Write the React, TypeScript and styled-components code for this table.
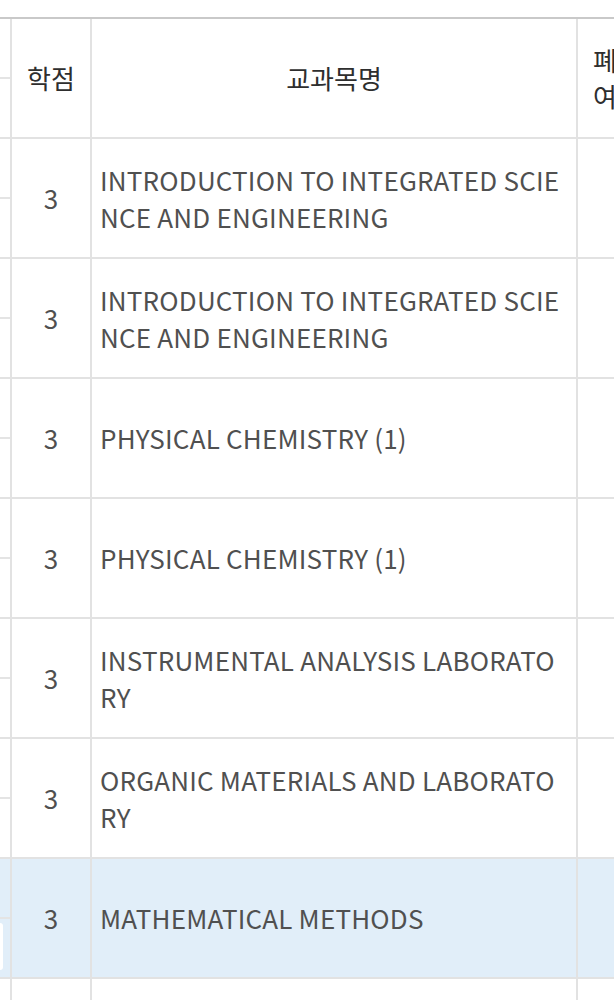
import React from "react";
import styled, { createGlobalStyle } from "styled-components";

const Global = createGlobalStyle`
  html, body { margin: 0; padding: 0; background: #fff; overflow: hidden; }
  body { font-family: "Noto Sans CJK KR", "Noto Sans", sans-serif; }
`;

const Page = styled.div`
  padding-top: 17px;
  width: 614px;
  height: 1000px;
  overflow: hidden;
`;

const Table = styled.table`
  border-collapse: separate;
  border-spacing: 0;
  border-top: 2px solid #c9c9c9;
  table-layout: fixed;
  width: 660px;
  font-size: 26px;
  line-height: 37.5px;
`;

const Row = styled.tr<{ $active?: boolean }>`
  background: ${(p) => (p.$active ? "#e1eef9" : "#fff")};
`;

const Cell = styled.td<{ $align?: string }>`
  height: 118px;
  padding: ${(p) => (p.$align === "center" ? "0" : "0 11px 0 8px")};
  border-right: 2px solid #e2e2e2;
  border-bottom: 2px solid #e2e2e2;
  color: #505050;
  letter-spacing: 0.2px;
  vertical-align: middle;
  text-align: ${(p) => p.$align || "left"};
  word-break: break-all;
  box-sizing: content-box;
`;

const HeadCell = styled(Cell).attrs({ as: "th" })`
  color: #2e2e2e;
  font-weight: 400;
  text-align: center;
  letter-spacing: 0;
  padding: 0;
`;

const EdgeCell = styled.td`
  padding: 0;
  height: 118px;
  border-right: 2px solid #e2e2e2;
  border-bottom: 2px solid #e2e2e2;
  vertical-align: top;
`;

const EdgeTop = styled.div`
  height: 58px;
  border-bottom: 2px solid #e4e4e4;
`;

const EdgeButton = styled.div`
  margin-top: 4px;
  height: 47px;
  width: 3px;
  background: #fff;
  border-radius: 0 4px 4px 0;
`;

const WrapHead = styled.span`
  display: inline-block;
  width: 52px;
  line-height: 36px;
  text-align: left;
`;

const rows = [
  "INTRODUCTION TO INTEGRATED SCIENCE AND ENGINEERING",
  "INTRODUCTION TO INTEGRATED SCIENCE AND ENGINEERING",
  "PHYSICAL CHEMISTRY (1)",
  "PHYSICAL CHEMISTRY (1)",
  "INSTRUMENTAL ANALYSIS LABORATORY",
  "ORGANIC MATERIALS AND LABORATORY",
  "MATHEMATICAL METHODS",
];

export default function App() {
  return (
    <>
      <Global />
      <Page>
        <Table>
          <colgroup>
            <col style={{ width: 12 }} />
            <col style={{ width: 80 }} />
            <col style={{ width: 486 }} />
            <col style={{ width: 84 }} />
          </colgroup>
          <thead>
            <Row>
              <EdgeCell>
                <EdgeTop />
              </EdgeCell>
              <HeadCell>학점</HeadCell>
              <HeadCell>교과목명</HeadCell>
              <HeadCell>
                <WrapHead>폐강 여부</WrapHead>
              </HeadCell>
            </Row>
          </thead>
          <tbody>
            {rows.map((name, i) => {
              const active = i === rows.length - 1;
              return (
                <Row key={i} $active={active}>
                  <EdgeCell>
                    <EdgeTop />
                    {active && <EdgeButton />}
                  </EdgeCell>
                  <Cell $align="center">3</Cell>
                  <Cell>{name}</Cell>
                  <Cell />
                </Row>
              );
            })}
            <Row>
              <EdgeCell />
              <Cell />
              <Cell />
              <Cell />
            </Row>
          </tbody>
        </Table>
      </Page>
    </>
  );
}
